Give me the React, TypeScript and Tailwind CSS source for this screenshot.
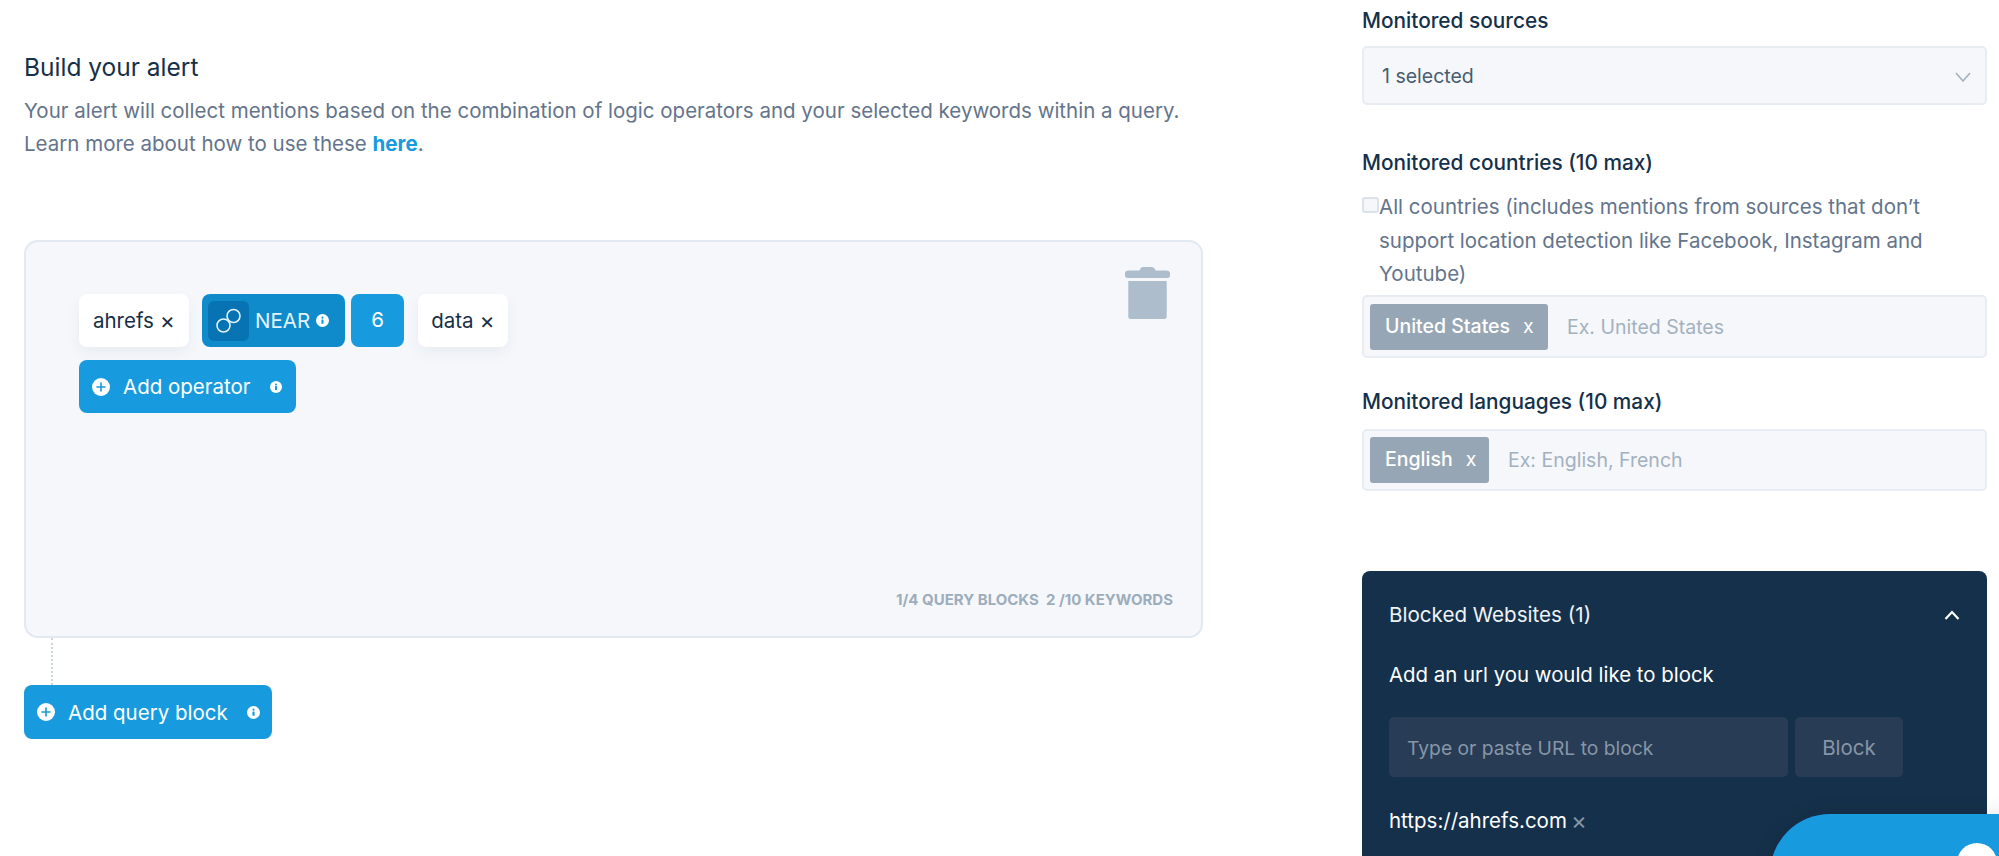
import React from "react";

const font = { fontFamily: "Inter, 'Liberation Sans', sans-serif" };

function Info({ className = "" }: { className?: string }) {
  return (
    <svg viewBox="0 0 12 12" className={className} aria-hidden="true">
      <circle cx="6" cy="6" r="6" fill="#fff" />
      <rect x="5" y="5" width="2" height="4" rx="0.5" fill="#179bde" />
      <circle cx="6" cy="3.4" r="1" fill="#179bde" />
    </svg>
  );
}

function Plus() {
  return (
    <svg viewBox="0 0 18 18" className="w-[18px] h-[18px] shrink-0" aria-hidden="true">
      <circle cx="9" cy="9" r="9" fill="#fff" />
      <path d="M9 5v8M5 9h8" stroke="#179bde" strokeWidth="1.6" strokeLinecap="round" />
    </svg>
  );
}

function Keyword({ label, w }: { label: string; w: string }) {
  return (
    <div className={`h-[53px] ${w} bg-white rounded-lg shadow-[0_6px_14px_rgba(30,60,90,0.06)] flex items-center justify-center gap-[6px] pt-[2px] text-[20.500px] text-[#172f47]`}>
      <span>{label}</span>
      <span className="text-[23px] leading-none">×</span>
    </div>
  );
}

function Label({ children, className = "" }: { children: React.ReactNode; className?: string }) {
  return <div className={`text-[20.800px] leading-[28px] font-medium text-[#15304a] ${className}`}>{children}</div>;
}

function Tag({ label, w }: { label: string; w: string }) {
  return (
    <div className={`h-[46px] ${w} shrink-0 bg-[#97a6b4] rounded-[3px] flex items-center pl-[15px] gap-[13px] text-[19.500px] font-medium text-white`}>
      <span>{label}</span>
      <span className="font-normal">x</span>
    </div>
  );
}

export default function App() {
  return (
    <div style={font} className="w-[1999px] h-[856px] overflow-hidden bg-white flex relative">
      <main className="w-[1362px] shrink-0 pl-[24px] pt-[51px]">
        <h2 className="text-[24.500px] leading-[32px] text-[#15304a]">Build your alert</h2>
        <p className="mt-[11px] w-[1200px] text-[20.500px] leading-[33px] text-[#64748b]">
          Your alert will collect mentions based on the combination of logic operators and your selected keywords within a query.
          <br />
          Learn more about how to use these <a className="font-bold text-[#179bde]">here</a>.
        </p>

        <section className="mt-[80px] w-[1179px] h-[398px] rounded-[14px] bg-[#f5f7fb] border-2 border-[#e2e9f1] pl-[53px] pr-[31px] pt-[52px] pb-[26px] flex flex-col">
          <div className="flex">
            <div className="flex-1 flex flex-col gap-[13px]">
              <div className="flex items-center">
                <Keyword label="ahrefs" w="w-[110px]" />
                <div className="ml-[13px] h-[53px] w-[143px] bg-[#0f8acb] rounded-lg flex items-center pl-[6px] text-[20.500px] text-white">
                  <div className="w-[41px] h-[40px] bg-[#0773b2] rounded-md flex items-center justify-center">
                    <svg viewBox="0 0 30 30" className="w-[30px] h-[30px]" fill="none" stroke="#dff2fc" strokeWidth="1.600" aria-hidden="true">
                      <circle cx="9.500" cy="19.500" r="6.500" />
                      <circle cx="19.500" cy="10" r="6.500" />
                    </svg>
                  </div>
                  <span className="ml-[6px] pt-[2px] text-[#e3f4fd]">NEAR</span>
                  <Info className="ml-[6px] w-[13px] h-[13px]" />
                </div>
                <div className="ml-[6px] h-[53px] w-[53px] bg-[#179bde] rounded-lg flex items-center justify-center text-[20.500px] text-white">6</div>
                <div className="ml-[14px]">
                  <Keyword label="data" w="w-[90px]" />
                </div>
              </div>
              <button className="h-[53px] w-[217px] bg-[#179bde] rounded-lg flex items-center pl-[13px] text-[20.500px] text-white">
                <Plus />
                <span className="ml-[13px] pt-[2px]">Add operator</span>
                <Info className="ml-[19px] w-[12px] h-[12px]" />
              </button>
            </div>
            <svg viewBox="0 0 45 52" className="w-[45px] h-[52px] -mt-[27px] shrink-0" aria-hidden="true">
              <path d="M14.500 3.500C15 1 17 0 18.500 0h8c1.500 0 3.500 1 4 3.500H41.500a3.800 3.800 0 0 1 0 7.600H3.500a3.800 3.800 0 0 1 0-7.600z" fill="#adbdcb" />
              <path d="M3.300 14h38.400v35.500a2.500 2.500 0 0 1-2.500 2.500H5.800a2.500 2.500 0 0 1-2.500-2.500z" fill="#adbdcb" />
            </svg>
          </div>
          <div className="mt-auto -mr-[3px] text-right text-[15px] leading-[20px] font-bold text-[#9dadbb] whitespace-pre">
            1/4 QUERY BLOCKS  2 /10 KEYWORDS
          </div>
        </section>

        <div className="ml-[27px] w-0 h-[47px] border-l-2 border-dotted border-[#ccd6e0]" />

        <button className="h-[54px] w-[248px] bg-[#179bde] rounded-lg flex items-center pl-[13px] text-[20.500px] text-white">
          <Plus />
          <span className="ml-[13px] pt-[2px]">Add query block</span>
          <Info className="ml-[19px] w-[13px] h-[13px]" />
        </button>
      </main>

      <aside className="w-[625px] shrink-0 pt-[7px]">
        <Label>Monitored sources</Label>
        <div className="mt-[11px] h-[59px] bg-[#f5f7fb] border-2 border-[#e8edf4] rounded-[5px] flex items-center justify-between pl-[18px] pr-[14px] pt-[2px] text-[19.500px] text-[#475c72]">
          <span>1 selected</span>
          <svg viewBox="0 0 16 10" className="w-[16px] h-[10px]" fill="none" stroke="#a3b1bf" strokeWidth="1.600" aria-hidden="true">
            <path d="M1 1l7 8 7-8" />
          </svg>
        </div>

        <Label className="mt-[44px]">Monitored countries (10 max)</Label>
        <div className="mt-[13px] flex text-[20.500px] leading-[33.500px] text-[#64748b]">
          <div className="mt-[7px] w-[17px] h-[16px] shrink-0 bg-[#f5f7fb] border-2 border-[#dbe2ea] rounded-[3px]" />
          <div className="w-[570px]">All countries (includes mentions from sources that don’t support location detection like Facebook, Instagram and Youtube)</div>
        </div>

        <div className="mt-[4.500px] h-[63px] bg-[#f5f7fb] border-2 border-[#e8edf4] rounded-[5px] flex items-center pl-[6px] text-[19.500px]">
          <Tag label="United States" w="w-[178px]" />
          <span className="ml-[19px] pt-[2px] text-[#a3b1bf]">Ex. United States</span>
        </div>

        <Label className="mt-[30px]">Monitored languages (10 max)</Label>
        <div className="mt-[13px] h-[62px] bg-[#f5f7fb] border-2 border-[#e8edf4] rounded-[5px] flex items-center pl-[6px] text-[19.500px]">
          <Tag label="English" w="w-[119px]" />
          <span className="ml-[19px] pt-[2px] text-[#a3b1bf]">Ex: English, French</span>
        </div>

        <div className="mt-[80px] h-[300px] bg-[#15304a] rounded-t-lg pl-[27px] pr-[27px] pt-[30px] text-white">
          <div className="flex items-center justify-between h-[28px] text-[20.600px]">
            <span className="text-[#eef3f7]">Blocked Websites (1)</span>
            <svg viewBox="0 0 16 10" className="w-[16px] h-[10px]" fill="none" stroke="#fff" strokeWidth="2.200" aria-hidden="true">
              <path d="M1.500 9L8 2l6.500 7" />
            </svg>
          </div>
          <div className="mt-[32px] text-[20.400px] leading-[28px]">Add an url you would like to block</div>
          <div className="mt-[28px] flex gap-[7px]">
            <div className="w-[399px] h-[60px] bg-[#283c55] rounded-[5px] flex items-center pl-[18px] pt-[2px] text-[19.300px] text-[#8796a6]">Type or paste URL to block</div>
            <div className="w-[108px] h-[60px] bg-[#283c55] rounded-[5px] flex items-center justify-center pt-[2px] text-[20.500px] text-[#8796a6]">Block</div>
          </div>
          <div className="mt-[30px] flex items-center gap-[4px] text-[20.500px] leading-[28px]">
            <span>https://ahrefs.com</span>
            <span className="text-[24px] leading-none text-[#8796a6]">×</span>
          </div>
        </div>
      </aside>

      <div className="absolute left-[1770px] top-[814px] w-[300px] h-[120px] rounded-[60px] bg-[#179bde] shadow-[0_0_20px_rgba(0,0,0,0.1)]">
        <div className="absolute left-[187px] top-[29px] w-[40px] h-[40px] rounded-full bg-white" />
      </div>
    </div>
  );
}
